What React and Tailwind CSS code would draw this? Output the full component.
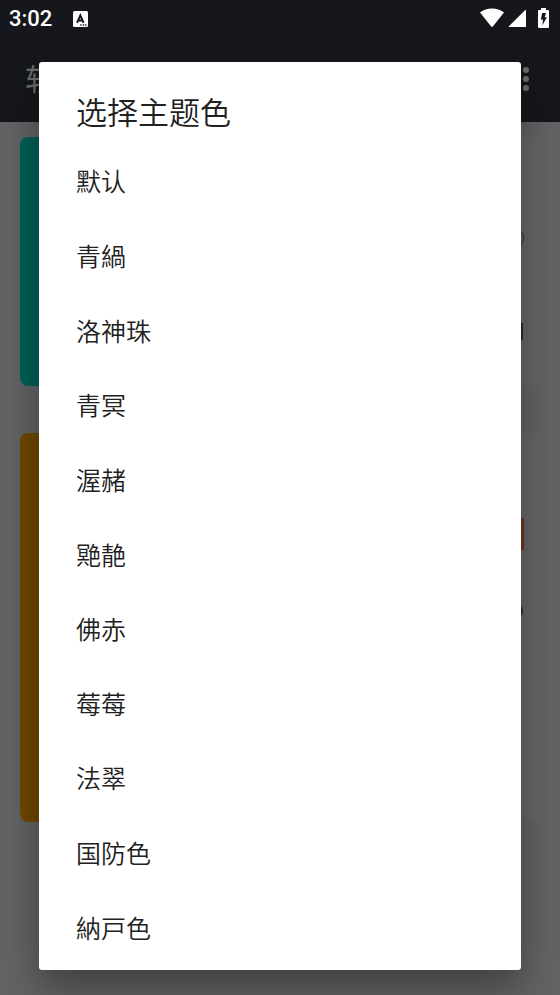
const themeColors = ["默认", "青緺", "洛神珠", "青冥", "渥赭", "䒌靘", "佛赤", "莓莓", "法翠", "国防色", "納戸色"];

function StatusBar() {
  return (
    <div className="h-[36px] flex items-center justify-between pl-[9px] pr-[11px] text-white">
      <div className="flex items-center gap-[21px] pt-[2px]">
        <span className="font-[Roboto,sans-serif] text-[22px] leading-[36px] font-medium">3:02</span>
        {/* Keyboard input indicator */}
        <svg className="w-[15px] h-[16px]" viewBox="0 0 15 16">
          <rect width="15" height="16" rx="1.5" fill="currentColor" />
          <path d="M4 11.800 7.300 4.400 10.600 11.800M5.400 9.400h3.800" fill="none" stroke="#15171c" strokeWidth="2" />
          <path d="M7.300 14h1.400M9.800 14h1.400M12.200 14h1.400" stroke="#15171c" strokeWidth="1.300" />
        </svg>
      </div>
      <div className="flex items-center">
        <svg className="w-[24px] h-[20px]" viewBox="0 0 24 20">
          <path d="M0 4.600C3.400 2 7.500.6 12 .6S20.600 2 24 4.600L12.800 18.500Q12 19.400 11.200 18.500Z" fill="currentColor" />
        </svg>
        <svg className="ml-[4px] w-[18px] h-[20px]" viewBox="0 0 18 20">
          <path d="M17 2.200Q18 1.400 18 2.600V19H1.200Q.2 19 .9 18.200Z" fill="currentColor" />
        </svg>
        <svg className="ml-[12px] w-[11px] h-[20px]" viewBox="0 0 11 20">
          <path d="M3 0h5v2h2a1 1 0 0 1 1 1v16a1 1 0 0 1-1 1H1a1 1 0 0 1-1-1V3a1 1 0 0 1 1-1h2z" fill="currentColor" />
          <path d="M4.200 5H8L6.700 9.300H9L4.300 17.200 5 11.500H2.800z" fill="#15171c" />
        </svg>
      </div>
    </div>
  );
}

function Toolbar() {
  return (
    <div className="h-[86px] flex items-center justify-between pl-[25px] pr-[31px] text-[#6b6b6c]">
      <h1 className="pb-[4px] text-[30px] leading-[80px]">软件</h1>
      <button type="button" aria-label="更多" className="flex flex-col gap-[3px]">
        <span className="size-[6px] rounded-full bg-[#6b6b6c]" />
        <span className="size-[6px] rounded-full bg-[#6b6b6c]" />
        <span className="size-[6px] rounded-full bg-[#6b6b6c]" />
      </button>
    </div>
  );
}

function ThemeDialog() {
  return (
    <div className="absolute inset-0 flex flex-col px-[39px] pt-[62px] pb-[25px]">
      <div
        role="dialog"
        aria-modal="true"
        aria-labelledby="theme-title"
        className="flex-1 flex flex-col rounded-[3px] bg-white pb-[6px] text-[#212121] shadow-[0_18px_38px_rgba(0,0,0,0.36)]"
      >
        <h2 id="theme-title" className="px-[37px] pt-[27px] pb-[10px] text-[31px] leading-[44px] font-[350]">
          选择主题色
        </h2>
        <ul className="flex-1 flex flex-col">
          {themeColors.map((name) => (
            <li key={name} className="flex-1 flex">
              <button type="button" className="w-full px-[37px] text-left text-[25px] leading-[36px] font-[350]">
                {name}
              </button>
            </li>
          ))}
        </ul>
      </div>
    </div>
  );
}

export default function App() {
  return (
    <div className="relative min-h-screen overflow-hidden bg-[#616365] font-['Noto_Sans_CJK_SC',sans-serif]">
      <header className="bg-[#15171c]">
        <StatusBar />
        <Toolbar />
      </header>

      <main className="flex flex-col gap-[47px] px-[20px] pt-[15px]">
        <section className="h-[249px] flex justify-between overflow-hidden rounded-[8px] bg-[#666666]">
          <div className="w-[96px] bg-[#005f55]" />
          <div className="flex flex-col items-end pt-[90px] pr-[16px]">
            <div className="size-[22px] rounded-full border border-[#333333]" />
            <div className="mt-[74px] mr-[1px] w-[20px] h-[17px] bg-[#2a2a2a]" />
          </div>
        </section>

        <section className="h-[389px] flex justify-between overflow-hidden rounded-[8px] bg-[#666666]">
          <div className="w-[96px] bg-[#6f4700]" />
          <div className="flex flex-col items-end pt-[85px] pr-[16px]">
            <div className="w-[60px] h-[32px] bg-[#753420]" />
            <div className="mt-[53px] mr-[1px] size-[16px] rounded-full bg-[#2a2a2a]" />
          </div>
        </section>
      </main>

      <ThemeDialog />
    </div>
  );
}
